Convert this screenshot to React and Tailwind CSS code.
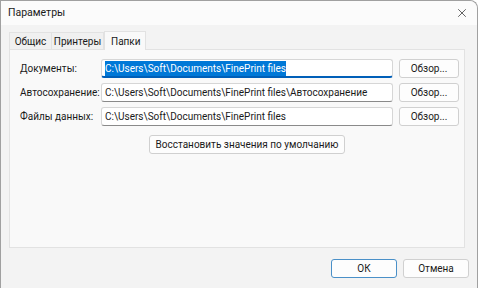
import { X } from "lucide-react";

const rows = [
  { label: "Документы:", value: "C:\\Users\\Soft\\Documents\\FinePrint files", selected: true },
  { label: "Автосохранение:", value: "C:\\Users\\Soft\\Documents\\FinePrint files\\Автосохранение" },
  { label: "Файлы данных:", value: "C:\\Users\\Soft\\Documents\\FinePrint files" },
];

function App() {
  return (
    <div className="h-[288px] w-[480px] bg-white" style={{ fontFamily: 'Roboto, "Noto Sans", sans-serif' }}>
      <div className="flex h-[288px] w-[478px] flex-col rounded-tr-lg border border-[#a0a0a0] border-b-0 bg-[#f3f3f3] text-[10px] text-[#1a1a1a]">
        <div className="flex h-[24px] items-center justify-between rounded-tr-lg bg-[#fbfbfb] pl-[7px] pr-[8px]">
          <span className="text-[10.5px]">Параметры</span>
          <X size={14} strokeWidth={1.2} className="text-[#222]" />
        </div>
        <div className="flex h-[24px] items-end pl-[8px] pt-[6px]">
          <div className="flex h-[17px] w-[43px] items-center justify-center border border-b-0 border-[#e2e2e2] bg-[#f0f0f0]">Общис</div>
          <div className="flex h-[17px] w-[52px] items-center justify-center border border-b-0 border-l-0 border-[#e2e2e2] bg-[#f0f0f0]">Принтеры</div>
          <div className="-mb-px relative z-10 flex h-[19px] w-[42px] items-center border border-b-0 border-[#e2e2e2] bg-[#f9f9f9] pl-[6px]">Папки</div>
        </div>
        <div className="ml-[8px] flex h-[199px] w-[456px] flex-col border border-[#e2e2e2] bg-[#f9f9f9] pl-[10px] pt-[9px]">
          <div className="flex flex-col gap-[5px]">
            {rows.map((r) => (
              <div key={r.label} className="flex h-[19px] items-center">
                <span className="w-[81px] whitespace-nowrap">{r.label}</span>
                <div
                  className={
                    "flex h-[19px] w-[292px] items-center rounded-[3px] border border-[#d6d6d6] bg-white px-[3px] " +
                    (r.selected ? "border-b-2 border-b-[#005fb8]" : "border-b-[#8a8a8a]")
                  }
                >
                  <span className={"whitespace-nowrap " + (r.selected ? "bg-[#0078d7] text-white" : "")}>{r.value}</span>
                </div>
                <button className="ml-[6px] flex h-[19px] w-[60px] items-center justify-center rounded-[3px] border border-[#d0d0d0] bg-[#fdfdfd]">
                  Обзор...
                </button>
              </div>
            ))}
          </div>
          <div className="mt-[9px] flex pl-[129px]">
            <button className="flex h-[19px] w-[196px] items-center justify-center whitespace-nowrap rounded-[3px] border border-[#d0d0d0] bg-[#fdfdfd]">
              Восстановить значения по умолчанию
            </button>
          </div>
        </div>
        <div className="flex justify-end gap-[6px] pr-[8px] pt-[11px]">
          <button className="flex h-[19px] w-[66px] items-center justify-center rounded-[3px] border border-[#4a90c8] bg-[#fdfdfd]">
            ОК
          </button>
          <button className="flex h-[19px] w-[66px] items-center justify-center rounded-[3px] border border-[#d0d0d0] bg-[#fdfdfd]">
            Отмена
          </button>
        </div>
      </div>
    </div>
  );
}

export default App;
